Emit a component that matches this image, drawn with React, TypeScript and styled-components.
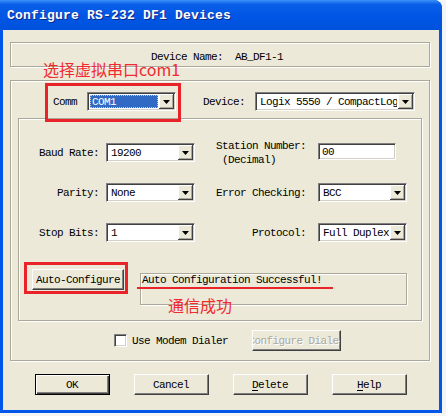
import styled, { createGlobalStyle, css } from 'styled-components';

const GlobalStyle = createGlobalStyle`
  html, body {
    margin: 0;
    padding: 0;
    background: #f4f4f2;
  }
  body {
    width: 446px;
    height: 416px;
    overflow: hidden;
  }
`;

const mono = `"Liberation Mono", "DejaVu Sans Mono", monospace`;
const cjk = `"Noto Sans CJK SC", "Noto Sans", sans-serif`;

const etched = css`
  border: 1px solid #aca899;
  box-shadow: inset 1px 1px 0 #fff, 1px 1px 0 #fff;
`;

const sunken = css`
  border: 1px solid;
  border-color: #808080 #fff #fff #808080;
  box-shadow: inset 1px 1px 0 #404040, inset -1px -1px 0 #d4d0c8;
`;

function Arrow() {
  return (
    <svg width="7" height="4" viewBox="0 0 7 4">
      <polygon points="0,0 7,0 3.5,4" fill="#000" />
    </svg>
  );
}

function Select({ width, value, selected }: { width: number; value: string; selected?: boolean }) {
  return (
    <SelectBox $w={width}>
      <SelectValue $selected={selected}>{value}</SelectValue>
      <ArrowButton>
        <Arrow />
      </ArrowButton>
    </SelectBox>
  );
}

export default function App() {
  return (
    <>
      <GlobalStyle />
      <Window>
        <TitleBar>Configure RS-232 DF1 Devices</TitleBar>
        <Body>
          <DeviceBox>Device Name:&nbsp;&nbsp;AB_DF1-1</DeviceBox>
          <MainGroup>
            <CommRow>
              <Label $pad={10}>Comm</Label>
              <Select width={89} value="COM1" selected />
              <Label $pad={10} style={{ marginLeft: 27 }}>
                Device:
              </Label>
              <Select width={160} value="Logix 5550 / CompactLogix" />
            </CommRow>
            <SettingsBox>
              <FieldGrid>
                <Label $pad={7} $right>Baud Rate:</Label>
                <Select width={89} value="19200" />
                <Label $pad={12} $right>
                  <StackedLabel>
                    <span>Station Number:</span>
                    <span>&nbsp;(Decimal)</span>
                  </StackedLabel>
                </Label>
                <TextInput>00</TextInput>

                <Label $pad={7} $right>Parity:</Label>
                <Select width={89} value="None" />
                <Label $pad={12} $right>Error Checking:</Label>
                <Select width={89} value="BCC" />

                <Label $pad={7} $right>Stop Bits:</Label>
                <Select width={89} value="1" />
                <Label $pad={12} $right>Protocol:</Label>
                <Select width={89} value="Full Duplex" />
              </FieldGrid>
              <AutoRow>
                <Button $w={92}>Auto-Configure</Button>
                <StatusBox>Auto Configuration Successful!</StatusBox>
              </AutoRow>
            </SettingsBox>
            <DialerRow>
              <CheckBox />
              <span>Use Modem Dialer</span>
              <Button $w={89} $disabled>
                Configure Dialer
              </Button>
            </DialerRow>
          </MainGroup>
          <ButtonRow>
            <Button $w={75} $default>
              OK
            </Button>
            <Button $w={75}>Cancel</Button>
            <Button $w={75}>
              <u>D</u>elete
            </Button>
            <Button $w={75}>
              <u>H</u>elp
            </Button>
          </ButtonRow>
        </Body>

        <NoteText $x={43} $y={61}>选择虚拟串口com1</NoteText>
        <NoteBox $x={45} $y={83} $w={136} $h={39} />
        <NoteBox $x={24} $y={262} $w={104} $h={32} />
        <NoteLine $x={137} $y={287} $w={196} />
        <NoteText $x={168} $y={297}>通信成功</NoteText>
      </Window>
    </>
  );
}

const Window = styled.div`
  position: relative;
  width: 442px;
  height: 413px;
  box-sizing: border-box;
  display: flex;
  flex-direction: column;
  background: #0055ea;
  border-radius: 0 8px 0 0;
  font-family: ${mono};
  font-size: 11px;
  letter-spacing: -0.6px;
  color: #000;
`;

const TitleBar = styled.div`
  height: 30px;
  flex: none;
  display: flex;
  align-items: center;
  padding-left: 7px;
  border-radius: 0 8px 0 0;
  background: linear-gradient(180deg, #3d92f7 0%, #0a5fe8 14%, #0055e5 55%, #0052dc 100%);
  color: #fff;
  font-weight: bold;
  font-size: 13px;
  letter-spacing: 0.2px;
  text-shadow: 1px 1px 0 #0b2a86;
`;

const Body = styled.div`
  flex: 1;
  margin: 0 3px 3px 3px;
  background: #ece9d8;
  padding: 12px 9px 0 7px;
  display: flex;
  flex-direction: column;
`;

const DeviceBox = styled.div`
  ${etched};
  height: 25px;
  box-sizing: border-box;
  display: flex;
  align-items: center;
  justify-content: center;
  padding: 4px 6px 0 0;
`;

const MainGroup = styled.div`
  ${etched};
  margin-top: 13px;
  height: 281px;
  box-sizing: border-box;
  padding: 11px 7px 0 7px;
  display: flex;
  flex-direction: column;
`;

const CommRow = styled.div`
  height: 19px;
  display: flex;
  align-items: center;
  padding-left: 35px;
`;

const Label = styled.div<{ $pad?: number; $right?: boolean }>`
  padding-right: ${({ $pad }) => $pad ?? 0}px;
  text-align: ${({ $right }) => ($right ? 'right' : 'left')};
  white-space: nowrap;
  display: flex;
  justify-content: ${({ $right }) => ($right ? 'flex-end' : 'flex-start')};
`;

const StackedLabel = styled.div`
  display: flex;
  flex-direction: column;
  text-align: left;
  line-height: 14px;
`;

const SelectBox = styled.div<{ $w: number }>`
  ${sunken};
  width: ${({ $w }) => $w}px;
  height: 19px;
  box-sizing: border-box;
  padding: 1px;
  background: #fff;
  display: flex;
`;

const SelectValue = styled.div<{ $selected?: boolean }>`
  flex: 1;
  min-width: 0;
  overflow: hidden;
  white-space: nowrap;
  display: flex;
  align-items: center;
  padding-left: 2px;
  margin: 1px 1px 1px 1px;
  ${({ $selected }) =>
    $selected &&
    css`
      background: #316ac5;
      color: #fff;
      outline: 1px dotted #c8c8c8;
      outline-offset: -1px;
    `}
`;

const ArrowButton = styled.div`
  width: 15px;
  flex: none;
  background: #ece9d8;
  display: flex;
  align-items: center;
  justify-content: center;
  box-shadow: inset -1px -1px 0 #404040, inset 1px 1px 0 #fff, inset -2px -2px 0 #aca899;
`;

const SettingsBox = styled.div`
  ${etched};
  margin: 7px 0 0 0;
  height: 203px;
  box-sizing: border-box;
  padding-top: 24px;
`;

const FieldGrid = styled.div`
  display: grid;
  grid-template-columns: 87px 89px 123px 89px;
  grid-auto-rows: 19px;
  row-gap: 21px;
  align-items: center;
`;

const TextInput = styled.div`
  ${sunken};
  width: 78px;
  height: 17px;
  box-sizing: border-box;
  background: #fff;
  padding-left: 3px;
  display: flex;
  align-items: center;
  align-self: start;
`;

const AutoRow = styled.div`
  margin-top: 27px;
  padding-left: 13px;
  display: flex;
  gap: 16px;
  align-items: flex-start;
`;

const StatusBox = styled.div`
  ${etched};
  width: 267px;
  height: 32px;
  box-sizing: border-box;
  margin-top: 4px;
  padding: 0 1px;
  line-height: 12px;
`;

const DialerRow = styled.div`
  margin-top: 9px;
  height: 21px;
  display: flex;
  align-items: center;
  padding-left: 96px;
  gap: 5px;

  & > :last-child {
    margin-left: 19px;
  }
`;

const CheckBox = styled.div`
  ${sunken};
  width: 13px;
  height: 13px;
  box-sizing: border-box;
  background: #fff;
`;

const Button = styled.div<{ $w: number; $default?: boolean; $disabled?: boolean }>`
  width: ${({ $w }) => $w}px;
  height: 21px;
  flex: none;
  box-sizing: border-box;
  display: flex;
  align-items: center;
  justify-content: center;
  overflow: hidden;
  white-space: nowrap;
  background: #ece9d8;
  border: 1px solid;
  border-color: #fff #404040 #404040 #fff;
  box-shadow: inset -1px -1px 0 #808080;
  color: ${({ $disabled }) => ($disabled ? '#aca899' : '#000')};
  text-shadow: ${({ $disabled }) => ($disabled ? '1px 1px 0 #fff' : 'none')};

  ${({ $default }) =>
    $default &&
    css`
      border-color: #000;
      box-shadow: inset 1px 1px 0 #fff, inset -1px -1px 0 #404040, inset -2px -2px 0 #808080;
    `}

  u {
    text-decoration: underline;
    text-underline-offset: 2px;
  }
`;

const ButtonRow = styled.div`
  margin-top: 13px;
  padding-left: 1px;
  display: flex;
  justify-content: center;
  gap: 24px;
`;

const NoteText = styled.div<{ $x: number; $y: number }>`
  position: absolute;
  left: ${({ $x }) => $x}px;
  top: ${({ $y }) => $y}px;
  font-family: ${cjk};
  font-size: 16px;
  line-height: 16px;
  letter-spacing: 0;
  color: #f02a2e;
  white-space: nowrap;
`;

const NoteBox = styled.div<{ $x: number; $y: number; $w: number; $h: number }>`
  position: absolute;
  left: ${({ $x }) => $x}px;
  top: ${({ $y }) => $y}px;
  width: ${({ $w }) => $w}px;
  height: ${({ $h }) => $h}px;
  box-sizing: border-box;
  border: 3px solid #e8242a;
`;

const NoteLine = styled.div<{ $x: number; $y: number; $w: number }>`
  position: absolute;
  left: ${({ $x }) => $x}px;
  top: ${({ $y }) => $y}px;
  width: ${({ $w }) => $w}px;
  height: 2px;
  background: #e8242a;
`;
